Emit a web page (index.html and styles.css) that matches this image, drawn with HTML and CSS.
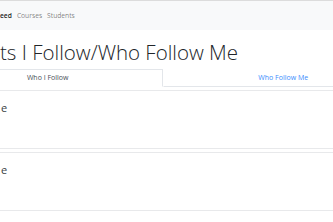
FILE: index.html
```html
<!DOCTYPE html>
<html>
<head>
<meta charset="utf-8">
<link rel="stylesheet" href="styles.css">
</head>
<body>
<nav class="navbar">
  <a class="nav-link active">eed</a>
  <a class="nav-link">Courses</a>
  <a class="nav-link">Students</a>
</nav>
<main class="content">
  <h1 class="title">ts I Follow/Who Follow Me</h1>
  <div class="tabs">
    <div class="tab active">Who I Follow</div>
    <div class="tab link">Who Follow Me</div>
  </div>
  <div class="card"><h5 class="card-title">e</h5></div>
  <div class="card"><h5 class="card-title">e</h5></div>
</main>
</body>
</html>
```
FILE: styles.css
```css
html, body {
  margin: 0;
  padding: 0;
  background: #fff;
  overflow: hidden;
}
body {
  font-family: "Open Sans", "Noto Sans", sans-serif;
  color: #212529;
  width: 333px;
  height: 222px;
}
.navbar {
  border-top: 1px solid #dcdcdc;
  background: #f8f9fa;
  height: 29px;
  display: flex;
  align-items: center;
  gap: 5px;
  font-size: 6.7px;
}
.nav-link {
  color: rgba(0,0,0,.5);
}
.nav-link.active {
  color: rgba(0,0,0,.9);
  font-weight: 600;
}
.content {
  padding-top: 5px;
}
.title {
  margin: 0;
  font-size: 20.5px;
  font-weight: 300;
  line-height: 34px;
  height: 34px;
  color: #212529;
  letter-spacing: 0;
}
.tabs {
  display: flex;
  margin-left: -68px;
  width: 471px;
  font-size: 7px;
}
.tab {
  flex: 1 1 auto;
  text-align: center;
  height: 16px;
  line-height: 16px;
  border: 1px solid transparent;
  border-bottom-color: #e3e6ea;
}
.tab.active {
  border-color: #e3e6ea;
  border-bottom-color: transparent;
  color: #495057;
}
.tab.link {
  color: #3b8dfd;
}
.card {
  margin: 3px -10px 0 -10px;
  border: 1px solid #e8e9eb;
  height: 57px;
  padding: 0 10px;
}
.card-title {
  margin: 0;
  padding-top: 9px;
  font-size: 11px;
  font-weight: 400;
  color: #3a3f44;
}
```
